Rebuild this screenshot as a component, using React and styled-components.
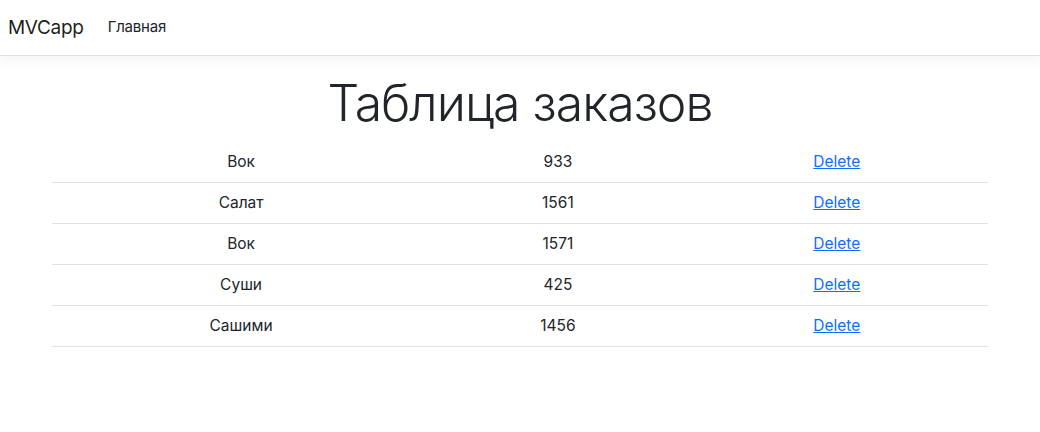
import React from "react";
import styled, { createGlobalStyle } from "styled-components";

const orders = [
  { name: "Вок", price: 933 },
  { name: "Салат", price: 1561 },
  { name: "Вок", price: 1571 },
  { name: "Суши", price: 425 },
  { name: "Сашими", price: 1456 },
];

const GlobalStyle = createGlobalStyle`
  body {
    margin: 0;
    font-family: Inter, "Noto Sans", "Liberation Sans", sans-serif;
    font-size: 16px;
    line-height: 1.5;
    color: #212529;
    background: #fff;
  }
`;

export default function App() {
  return (
    <>
      <GlobalStyle />
      <Navbar>
        <Brand href="#">MVCapp</Brand>
        <NavLink href="#">Главная</NavLink>
      </Navbar>
      <Container>
        <Title>Таблица заказов</Title>
        <Table>
          <tbody>
            {orders.map((o, i) => (
              <tr key={i}>
                <Cell $w="40.4%">{o.name}</Cell>
                <Cell $w="27.3%">{o.price}</Cell>
                <Cell>
                  <DeleteLink href="#">Delete</DeleteLink>
                </Cell>
              </tr>
            ))}
          </tbody>
        </Table>
      </Container>
    </>
  );
}

const Navbar = styled.nav`
  display: flex;
  align-items: center;
  height: 55px;
  padding: 0 8px;
  background: #fff;
  border-bottom: 1px solid #dee2e6;
  box-shadow: 0 4px 12px rgba(0, 0, 0, 0.05);
  margin-bottom: 16px;
`;

const Brand = styled.a`
  font-size: 19px;
  line-height: 30px;
  color: rgba(0, 0, 0, 0.9);
  text-decoration: none;
  margin-right: 16px;
  letter-spacing: -0.3px;
`;

const NavLink = styled.a`
  padding: 8px;
  font-size: 15px;
  color: #212529;
  text-decoration: none;
  letter-spacing: -0.2px;
`;

const Container = styled.main`
  max-width: 936px;
  margin: 0 auto;
  padding: 0 12px;
`;

const Title = styled.h1`
  margin: 0 0 8px;
  font-size: 50px;
  font-weight: 300;
  line-height: 62px;
  text-align: center;
  letter-spacing: -1px;
`;

const Table = styled.table`
  width: 100%;
  border-collapse: collapse;
  font-size: 15.5px;
  line-height: 24px;
`;

const Cell = styled.td`
  width: ${(p) => p.$w || "auto"};
  height: 24px;
  padding: 8px;
  text-align: center;
  border-bottom: 1px solid #dee2e6;
`;

const DeleteLink = styled.a`
  color: #0d6efd;
  text-decoration: underline;
`;
